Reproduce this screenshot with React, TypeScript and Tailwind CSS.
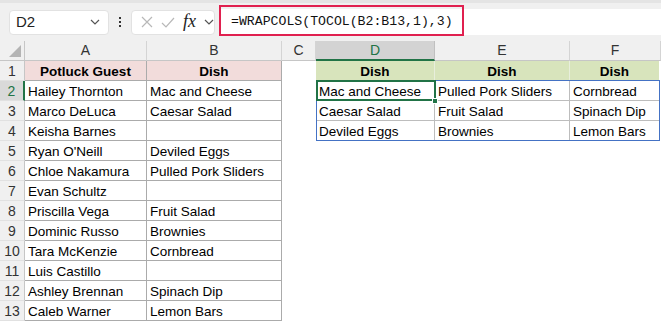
import React from 'react'

const guests: [string, string][] = [
  ['Hailey Thornton', 'Mac and Cheese'],
  ['Marco DeLuca', 'Caesar Salad'],
  ['Keisha Barnes', ''],
  ["Ryan O'Neill", 'Deviled Eggs'],
  ['Chloe Nakamura', 'Pulled Pork Sliders'],
  ['Evan Schultz', ''],
  ['Priscilla Vega', 'Fruit Salad'],
  ['Dominic Russo', 'Brownies'],
  ['Tara McKenzie', 'Cornbread'],
  ['Luis Castillo', ''],
  ['Ashley Brennan', 'Spinach Dip'],
  ['Caleb Warner', 'Lemon Bars'],
]

const spill: string[][] = [
  ['Mac and Cheese', 'Pulled Pork Sliders', 'Cornbread'],
  ['Caesar Salad', 'Fruit Salad', 'Spinach Dip'],
  ['Deviled Eggs', 'Brownies', 'Lemon Bars'],
]

const Chevron = () => (
  <svg width="10" height="6" viewBox="0 0 10 6" fill="none" stroke="#555" strokeWidth="1.2">
    <path d="M1 1l4 4 4-4" />
  </svg>
)

const RowHead = ({ n, active }: { n: number; active?: boolean }) => (
  <div
    className={
      active
        ? 'w-[25px] shrink-0 h-[20px] bg-[#d9d9d9] border-r-2 border-b border-r-[#217346] border-b-[#e1e1e1] text-[#217346] text-center leading-[21px] text-[14px]'
        : 'w-[25px] shrink-0 h-[20px] bg-[#f0f0f0] border-r border-b border-r-[#c6c6c6] border-b-[#e1e1e1] text-[#333] text-center leading-[21px] text-[14px]'
    }
  >
    {n}
  </div>
)

export default function App() {
  return (
    <div className="w-[661px] h-[322px] overflow-hidden bg-white text-black" style={{ fontFamily: '"Liberation Sans", Arial, sans-serif' }}>
      {/* toolbar / formula bar */}
      <div className="h-[41px] bg-[#f0f0f0] border-t-[3px] border-[#e4e4e4] flex items-center">
        <div className="ml-[9px] w-[100px] h-[25px] bg-white rounded-[4px] border border-[#e2e2e2] flex items-center justify-between pl-[6px] pr-[8px]">
          <span className="text-[15px] text-[#222]">D2</span>
          <Chevron />
        </div>
        <div className="w-[22px] flex flex-col items-center gap-[2px]">
          <span className="w-[2px] h-[2px] bg-[#333]" />
          <span className="w-[2px] h-[2px] bg-[#333]" />
          <span className="w-[2px] h-[2px] bg-[#333]" />
        </div>
        <div className="w-[84px] h-[25px] bg-white rounded-[4px] border border-[#e2e2e2] flex items-center pl-[9px] gap-[8px]">
          <svg width="12" height="12" viewBox="0 0 12 12" stroke="#b8b8b8" strokeWidth="1.2">
            <path d="M1 1l10 10M11 1L1 11" />
          </svg>
          <svg width="14" height="11" viewBox="0 0 14 11" fill="none" stroke="#b8b8b8" strokeWidth="1.2">
            <path d="M1 6l4 4 8-9" />
          </svg>
          <span className="text-[18px] italic text-[#222] leading-none -mt-[2px]" style={{ fontFamily: '"Liberation Serif", serif' }}>
            fx
          </span>
          <Chevron />
        </div>
        <div className="relative ml-[4px] flex-1 h-[26px] bg-white flex items-center pl-[12px]">
          <span className="text-[13.2px] text-[#111]" style={{ fontFamily: '"Liberation Mono", monospace' }}>
            =WRAPCOLS(TOCOL(B2:B13,1),3)
          </span>
          <div className="absolute left-[0px] top-[-4px] w-[245px] h-[31px] border-2 border-[#e0204f]" />
        </div>
      </div>

      {/* column headers */}
      <div className="flex h-[20px] text-[14px] text-[#333]">
        <div className="w-[25px] shrink-0 bg-[#f0f0f0] border-r border-b border-[#c6c6c6] relative">
          <svg className="absolute right-[3px] bottom-[3px]" width="12" height="12" viewBox="0 0 12 12">
            <path d="M12 0V12H0Z" fill="#b4b4b4" />
          </svg>
        </div>
        <div className="w-[122px] shrink-0 bg-[#f0f0f0] border-r border-b border-r-[#d4d4d4] border-b-[#c6c6c6] text-center leading-[19px]">A</div>
        <div className="w-[135px] shrink-0 bg-[#f0f0f0] border-r border-b border-r-[#d4d4d4] border-b-[#c6c6c6] text-center leading-[19px]">B</div>
        <div className="w-[34px] shrink-0 bg-[#f0f0f0] border-r border-b border-r-[#d4d4d4] border-b-[#c6c6c6] text-center leading-[19px]">C</div>
        <div className="w-[119px] shrink-0 bg-[#d3d3d3] border-r border-b-2 border-r-[#c0c0c0] border-b-[#217346] text-center leading-[19px] text-[#217346]">D</div>
        <div className="w-[135px] shrink-0 bg-[#f0f0f0] border-r border-b border-r-[#d4d4d4] border-b-[#c6c6c6] text-center leading-[19px]">E</div>
        <div className="w-[91px] shrink-0 bg-[#f0f0f0] border-r border-b border-r-[#d4d4d4] border-b-[#c6c6c6] text-center leading-[19px]">F</div>
      </div>

      {/* sheet body */}
      <div className="relative text-[13.5px]">
        <div className="flex h-[20px]">
          <RowHead n={1} />
          <div className="w-[122px] shrink-0 bg-[#f2dcdb] border-r border-b border-[#ababab] text-center font-bold leading-[21px]">Potluck Guest</div>
          <div className="w-[135px] shrink-0 bg-[#f2dcdb] border-r border-b border-[#ababab] text-center font-bold leading-[21px]">Dish</div>
          <div className="w-[34px] shrink-0" />
          <div className="w-[119px] shrink-0 bg-[#d8e4bc] border-r border-[#e8eedc] text-center font-bold leading-[21px]">Dish</div>
          <div className="w-[135px] shrink-0 bg-[#d8e4bc] border-r border-[#e8eedc] text-center font-bold leading-[21px]">Dish</div>
          <div className="w-[89px] shrink-0 bg-[#d8e4bc] text-center font-bold leading-[21px]">Dish</div>
        </div>
        {guests.map(([name, dish], i) => {
          const s = spill[i]
          return (
            <div key={i} className="flex h-[20px]">
              <RowHead n={i + 2} active={i === 0} />
              <div className="w-[122px] shrink-0 border-r border-b border-[#ababab] pl-[3px] leading-[21px] whitespace-nowrap">{name}</div>
              <div className="w-[135px] shrink-0 border-r border-b border-[#ababab] pl-[3px] leading-[21px] whitespace-nowrap">{dish}</div>
              <div className="w-[34px] shrink-0" />
              {s && (
                <>
                  <div className="w-[119px] shrink-0 border-r border-b border-[#bdbdbd] pl-[3px] leading-[21px] whitespace-nowrap">{s[0]}</div>
                  <div className="w-[135px] shrink-0 border-r border-b border-[#bdbdbd] pl-[3px] leading-[21px] whitespace-nowrap">{s[1]}</div>
                  <div className="w-[89px] shrink-0 border-b border-[#bdbdbd] pl-[3px] leading-[21px] whitespace-nowrap">{s[2]}</div>
                </>
              )}
            </div>
          )
        })}
        {/* spill range outline */}
        <div className="absolute left-[316px] top-[19px] w-[344px] h-[61px] border border-[#4472c4] pointer-events-none" />
        {/* active cell */}
        <div className="absolute left-[316px] top-[19px] w-[120px] h-[21px] border-2 border-[#217346] pointer-events-none" />
        <div className="absolute left-[432px] top-[37px] w-[6px] h-[6px] bg-[#217346] border border-white pointer-events-none" />
      </div>
    </div>
  )
}
